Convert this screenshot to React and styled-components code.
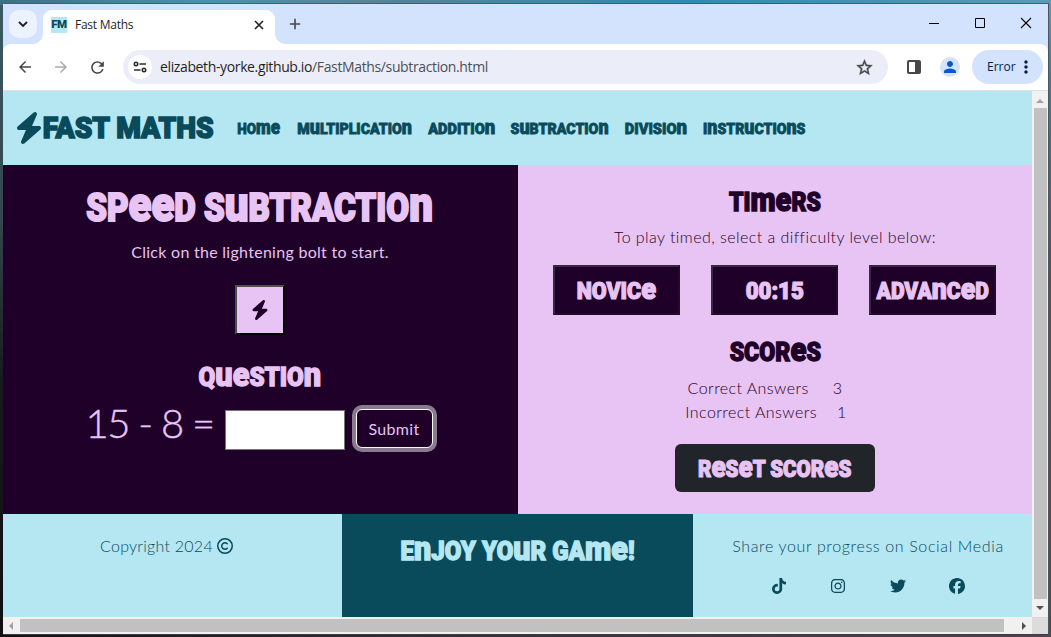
import React from 'react';
import styled, { createGlobalStyle } from 'styled-components';
import { FaBolt, FaTiktok, FaInstagram, FaTwitter, FaFacebook, FaRegCopyright } from 'react-icons/fa6';
import { MdArrowBack, MdArrowForward, MdRefresh, MdStarBorder, MdPerson, MdMoreVert } from 'react-icons/md';

const c = {
  ice: '#b5e7f3',
  teal: '#094a5b',
  plum: '#1f0028',
  lilac: '#e7c4f3',
};

const GlobalStyle = createGlobalStyle`
  * { box-sizing: border-box; }
  body { margin: 0; overflow: hidden; font-family: Lato, "Liberation Sans", sans-serif; }
  button, input { margin: 0; font: inherit; border-radius: 0; }
  svg { display: block; flex: none; }
`;

const Desktop = styled.div`
  width: 1051px;
  height: 637px;
  padding: 3px 2px 2px 3px;
  background:
    linear-gradient(90deg, #397287, #4a93ae 20%, #55859a 35%, #3389ae 65%, #5a9bb7) 0 0 / 100% 5px no-repeat,
    linear-gradient(#5c9db6, #467887 12%, #56505a 45%, #554653 100%) 100% 0 / 6px 100% no-repeat,
    linear-gradient(90deg, #141115, #35323a 45%, #514351) 0 100% / 100% 5px no-repeat,
    linear-gradient(#3a5a63, #34474c 35%, #181a1e 60%, #111014);
`;

const Window = styled.div`
  display: flex;
  flex-direction: column;
  width: 1046px;
  height: 632px;
  border-top: 1px solid #4d5a68;
  border-right: 1px solid #4d5560;
  border-bottom: 1px solid #3d3a40;
  background: #d3e2fd;
`;

const TabStrip = styled.div`
  display: flex;
  height: 40px;
  flex: none;
  padding-left: 6px;
`;

const TabSearch = styled.div`
  display: flex;
  align-items: center;
  justify-content: center;
  width: 28px;
  height: 28px;
  margin-top: 6px;
  border-radius: 10px;
  background: #ecf2fe;
`;

const Tab = styled.div`
  position: relative;
  display: flex;
  align-items: center;
  width: 232px;
  height: 34px;
  margin: 6px 0 0 6px;
  padding: 0 10px 5px 8px;
  border-radius: 9px 9px 0 0;
  background: #fff;
  &::before, &::after {
    content: '';
    position: absolute;
    bottom: 0;
    width: 10px;
    height: 10px;
  }
  &::before { left: -10px; background: radial-gradient(circle at 0 0, transparent 9.5px, #fff 10px); }
  &::after { right: -10px; background: radial-gradient(circle at 100% 0, transparent 9.5px, #fff 10px); }
`;

const Favicon = styled.div`
  width: 16px;
  height: 16px;
  margin-right: 8px;
  background: ${c.ice};
  color: ${c.teal};
  font: 900 11.5px/15px Roboto, sans-serif;
  letter-spacing: -0.5px;
  text-align: center;
`;

const TabTitle = styled.div`
  flex: 1;
  color: #1f1f1f;
  font: 12px/16px "Open Sans", sans-serif;
  letter-spacing: -0.25px;
`;

const NewTab = styled.div`
  display: flex;
  align-items: center;
  width: 28px;
  height: 40px;
  margin-left: 14px;
`;

const WindowButtons = styled.div`
  display: flex;
  align-items: center;
  gap: 34px;
  height: 38px;
  margin-left: auto;
  padding-right: 16px;
`;

const Toolbar = styled.div`
  display: flex;
  align-items: center;
  flex: none;
  height: 47px;
  padding: 0 5px 0 13px;
  border-bottom: 1px solid #dfe1e0;
  border-radius: 8px 8px 0 0;
  background: #fff;
  color: #474747;
`;

const NavIcon = styled.div`
  width: 18px;
  margin-right: 18px;
  opacity: ${p => (p.$dim ? 0.45 : 1)};
`;

const Omnibox = styled.div`
  display: flex;
  align-items: center;
  width: 765px;
  height: 34px;
  margin-left: -1px;
  padding: 0 14px 0 5px;
  border-radius: 17px;
  background: #ebeef8;
`;

const SiteInfo = styled.div`
  display: flex;
  align-items: center;
  justify-content: center;
  width: 24px;
  height: 24px;
  margin-right: 8px;
  border-radius: 50%;
  background: #fff;
`;

const Url = styled.div`
  flex: 1;
  color: #1f1f1f;
  font: 14px/20px "Open Sans", sans-serif;
  letter-spacing: -0.37px;
  white-space: nowrap;
`;

const UrlPath = styled.span`
  color: #4c4f57;
`;

const Star = styled(MdStarBorder)`
  stroke: currentColor;
  stroke-width: 0.5px;
  path[fill='none'] { stroke: none; }
`;

const SidePanel = styled.div`
  width: 14px;
  height: 14px;
  margin-left: 19px;
  border: 2px solid #474747;
  border-right-width: 6px;
  border-radius: 2px;
`;

const Avatar = styled.div`
  display: flex;
  align-items: center;
  justify-content: center;
  width: 20px;
  height: 20px;
  margin-left: 19px;
  border-radius: 50%;
  background: #d3e2fd;
  color: #0b57d0;
`;

const ErrorChip = styled.div`
  display: flex;
  align-items: center;
  justify-content: space-between;
  width: 71px;
  height: 34px;
  margin-left: 12px;
  padding: 0 7px 0 15px;
  border-radius: 17px;
  background: #d3e2fd;
  color: #041e49;
  font: 12px/16px "Open Sans", sans-serif;
`;

const Viewport = styled.div`
  display: grid;
  grid-template-columns: 1029px 16px;
  grid-template-rows: 526px 17px;
  background: #f1f1f1;
`;

const Page = styled.div`
  display: grid;
  grid-template-rows: 74px 349px 103px;
  color: ${c.plum};
`;

const Bar = styled.div`
  display: flex;
  flex-direction: ${p => (p.$row ? 'row' : 'column')};
  align-items: center;
  justify-content: space-between;
  padding: ${p => (p.$row ? '0 4px' : '6px 0 5px')};
`;

const Thumb = styled.div`
  width: ${p => p.$w}px;
  height: ${p => p.$h}px;
  background: #c1c1c1;
`;

const VThumb = styled(Thumb)`margin: 0 0 3px 1px;`;
const HThumb = styled(Thumb)`margin-right: 11px;`;

const Corner = styled.div`background: #dcdcdc;`;

/* Unicase display lettering: m, n, e and u keep their small form at capital height. */
const Word = styled.span`
  display: flex;
  justify-content: center;
  width: ${p => p.$width}px;
  padding-top: ${p => p.$drop || 0}px;
  font: 900 ${p => p.$size}px/1.2 Roboto, sans-serif;
  white-space: pre;
  -webkit-text-stroke: ${p => p.$size / 19}px currentColor;
`;

const Squeeze = styled.span`
  flex: none;
  transform: scaleX(${p => p.$k});
`;

const Small = styled.span`
  font-size: 1.27em;
  line-height: 0;
`;

function Display({ children, width, size, k, drop }) {
  return (
    <Word $width={width} $size={size} $drop={drop}>
      <Squeeze $k={k}>
        {children.split(/([emnu]+)/).map((s, i) => (i % 2 ? <Small key={i}>{s}</Small> : s.toUpperCase()))}
      </Squeeze>
    </Word>
  );
}

const Header = styled.header`
  display: flex;
  align-items: center;
  padding-left: 10px;
  background: ${c.ice};
  color: ${c.teal};
`;

const Brand = styled.div`
  display: flex;
  align-items: center;
`;

const Nav = styled.nav`
  display: flex;
  gap: 16px;
  margin-left: 25px;
`;

const Game = styled.main`
  display: grid;
  grid-template-columns: 515px 514px;
`;

const Play = styled.section`
  display: flex;
  flex-direction: column;
  align-items: center;
  padding: 20px 1px 0 0;
  background: ${c.plum};
  color: ${c.lilac};
`;

const Text = styled.p`
  margin: ${p => p.$m || 0};
  font-size: 16px;
  line-height: 24px;
  font-weight: ${p => p.$weight || 300};
  letter-spacing: ${p => p.$ls || 0.44}px;
  white-space: pre;
`;

const BoltButton = styled.button`
  display: flex;
  align-items: center;
  justify-content: center;
  width: 50px;
  height: 50px;
  margin: 21px 0 27px;
  padding: 0;
  border: 2px solid;
  border-color: #4f4f4f #000 #000 #4f4f4f;
  background: ${c.lilac};
  color: ${c.plum};
`;

const Question = styled.div`
  display: flex;
  align-items: flex-start;
  margin-top: 17px;
  padding-left: 1px;
`;

const Sum = styled.span`
  width: 139px;
  margin-top: -11px;
  font-size: 40px;
  line-height: 48px;
  font-weight: 300;
  letter-spacing: -1.5px;
  white-space: pre;
  -webkit-text-stroke: 0.4px currentColor;
`;

const Answer = styled.input`
  width: 120px;
  height: 40px;
  border: 1px solid #767676;
  background: #fff;
`;

const Submit = styled.button`
  width: 77px;
  height: 39px;
  margin: -1px 3px 0 11px;
  padding: 0;
  border: 1px solid #fff;
  border-radius: 6px;
  box-shadow: 0 0 0 4px #8a7a91;
  background: ${c.plum};
  color: ${c.lilac};
  letter-spacing: 0.3px;
`;

const Stats = styled.section`
  display: flex;
  flex-direction: column;
  align-items: center;
  padding-top: 22px;
  background: ${c.lilac};
`;

const Levels = styled.div`
  display: flex;
  gap: 31px;
  margin: 16px 1px 22px 0;
`;

const Level = styled.button`
  display: flex;
  align-items: center;
  justify-content: center;
  width: 127px;
  height: 50px;
  padding: 0;
  border: 2px solid;
  border-color: #3a2742 #210b29 #210b29 #3a2742;
  background: ${c.plum};
  color: ${c.lilac};
`;

const Score = styled.div`
  display: flex;
  gap: ${p => p.$gap}px;
  margin: ${p => p.$top || 0}px ${p => p.$shift}px 0 0;
`;

const Reset = styled.button`
  display: flex;
  align-items: center;
  justify-content: center;
  width: 200px;
  height: 48px;
  margin-top: 20px;
  border: 0;
  border-radius: 6px;
  background: #212529;
  color: ${c.lilac};
`;

const Footer = styled.footer`
  display: grid;
  grid-template-columns: 339px 351px 339px;
  color: ${c.teal};
`;

const Cell = styled.div`
  display: flex;
  flex-direction: column;
  align-items: center;
  padding: ${p => p.$pad};
  background: ${p => (p.$dark ? c.teal : c.ice)};
  color: ${p => (p.$dark ? c.ice : c.teal)};
`;

const Copyright = styled.div`
  display: flex;
  align-items: center;
  gap: 4px;
`;

const Socials = styled.div`
  display: flex;
  gap: 43.3px;
  margin-top: 20px;
`;

const navItems = [
  ['Home', 44, 0.87],
  ['Multiplication', 114.5, 0.915],
  ['Addition', 67.5, 0.94],
  ['Subtraction', 98, 0.915],
  ['Division', 62.5, 0.945],
  ['Instructions', 102, 0.91],
];

const Arrow = ({ d, color = '#505050' }) => (
  <svg width="8" height="8" viewBox="0 0 8 8"><path d={d} fill={color} /></svg>
);

export default function App() {
  return (
    <>
      <GlobalStyle />
      <Desktop>
        <Window>
          <TabStrip>
            <TabSearch>
              <svg width="10" height="8" viewBox="0 0 10 8" fill="none" stroke="#1f1f1f" strokeWidth="1.8"><path d="M1 2l4 4 4-4" /></svg>
            </TabSearch>
            <Tab>
              <Favicon>FM</Favicon>
              <TabTitle>Fast Maths</TabTitle>
              <svg width="12" height="12" viewBox="0 0 12 12" stroke="#1f1f1f" strokeWidth="1.6"><path d="M2 2l8 8M10 2l-8 8" /></svg>
            </Tab>
            <NewTab>
              <svg width="12" height="12" viewBox="0 0 12 12" stroke="#474747" strokeWidth="1.6"><path d="M6 .8v10.4M.8 6h10.4" /></svg>
            </NewTab>
            <WindowButtons>
              <svg width="12" height="12" viewBox="0 0 12 12" stroke="#000"><path d="M1 6.5h10" /></svg>
              <svg width="12" height="12" viewBox="0 0 12 12" stroke="#000" fill="none"><path d="M1.5 1.5h9v9h-9z" /></svg>
              <svg width="12" height="12" viewBox="0 0 12 12" stroke="#000" strokeWidth="1.1"><path d="M1 1l10 10M11 1L1 11" /></svg>
            </WindowButtons>
          </TabStrip>
          <Toolbar>
            <NavIcon><MdArrowBack size={18} /></NavIcon>
            <NavIcon $dim><MdArrowForward size={18} /></NavIcon>
            <NavIcon><MdRefresh size={19} /></NavIcon>
            <Omnibox>
              <SiteInfo>
                <svg width="14" height="12" viewBox="0 0 14 12" fill="none" stroke="#2b2b2b" strokeWidth="1.6"><circle cx="3" cy="3" r="1.7" /><path d="M6.5 3H13M1 9h6.5" /><circle cx="11" cy="9" r="1.7" /></svg>
              </SiteInfo>
              <Url>elizabeth-yorke.github.io<UrlPath>/FastMaths/subtraction.html</UrlPath></Url>
              <Star size={19} />
            </Omnibox>
            <SidePanel />
            <Avatar><MdPerson size={18} /></Avatar>
            <ErrorChip>Error<MdMoreVert size={20} /></ErrorChip>
          </Toolbar>
          <Viewport>
            <Page>
              <Header>
                <Brand>
                  <FaBolt size={32} />
                  <Display width={167} size={30} k={0.937}>FAST MATHS</Display>
                </Brand>
                <Nav>
                  {navItems.map(([label, width, k]) => (
                    <Display key={label} width={width} size={15.5} k={k} drop={2}>{label}</Display>
                  ))}
                </Nav>
              </Header>
              <Game>
                <Play>
                  <Display width={347} size={38.5} k={0.86}>Speed Subtraction</Display>
                  <Text $weight={400} $m="9px 0 0" $ls={0.28}>Click on the lightening bolt to start.</Text>
                  <BoltButton><FaBolt size={20} /></BoltButton>
                  <Display width={123} size={26} k={0.93}>Question</Display>
                  <Question>
                    <Sum>15 - 8 =</Sum>
                    <Answer />
                    <Submit>Submit</Submit>
                  </Question>
                </Play>
                <Stats>
                  <Display width={93} size={26} k={0.885}>Timers</Display>
                  <Text $m="7px 0 0">To play timed, select a difficulty level below:</Text>
                  <Levels>
                    <Level><Display width={80} size={23.5} k={0.915} drop={1}>Novice</Display></Level>
                    <Level><Display width={59} size={23.5} k={0.945} drop={1}>00:15</Display></Level>
                    <Level><Display width={113} size={23.5} k={0.895} drop={1}>Advanced</Display></Level>
                  </Levels>
                  <Display width={92} size={26} k={0.89}>Scores</Display>
                  <Score $gap={24} $shift={20} $top={8}><Text>Correct Answers</Text><Text>3</Text></Score>
                  <Score $gap={20} $shift={18}><Text>Incorrect Answers</Text><Text>1</Text></Score>
                  <Reset><Display width={154} size={23.5} k={0.875} drop={1}>Reset Scores</Display></Reset>
                </Stats>
              </Game>
              <Footer>
                <Cell $pad="20px 12px 0 0">
                  <Copyright><Text $ls={0.26}>Copyright 2024</Text><FaRegCopyright size={16} /></Copyright>
                </Cell>
                <Cell $dark $pad="22px 0 0">
                  <Display width={236} size={26} k={0.925}>Enjoy your game!</Display>
                </Cell>
                <Cell $pad="20px 0 0 11px">
                  <Text $ls={0.64}>Share your progress on Social Media</Text>
                  <Socials>
                    <FaTiktok size={16} /><FaInstagram size={16} /><FaTwitter size={16} /><FaFacebook size={16} />
                  </Socials>
                </Cell>
              </Footer>
            </Page>
            <Bar>
              <Arrow d="M0 6h8L4 2z" color="#a3a3a3" />
              <VThumb $w={13} $h={491} />
              <Arrow d="M0 2h8L4 6z" />
            </Bar>
            <Bar $row>
              <Arrow d="M6 0v8L2 4z" color="#a3a3a3" />
              <HThumb $w={984} $h={13} />
              <Arrow d="M2 0v8l4-4z" />
            </Bar>
            <Corner />
          </Viewport>
        </Window>
      </Desktop>
    </>
  );
}
